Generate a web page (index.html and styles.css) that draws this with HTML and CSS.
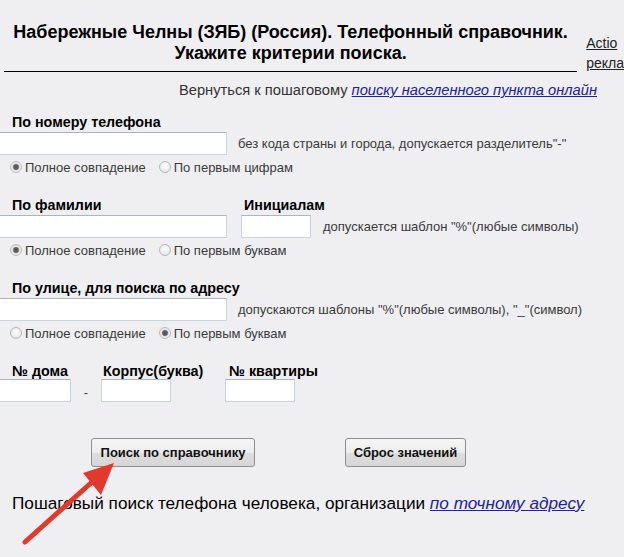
FILE: index.html
```html
<!DOCTYPE html>
<html lang="ru">
<head>
<meta charset="utf-8">
<title>Телефонный справочник</title>
<link rel="stylesheet" href="styles.css">
</head>
<body>
<div class="header">
  <h1 class="title">Набережные Челны (ЗЯБ) (Россия). Телефонный справочник.<br>Укажите критерии поиска.</h1>
  <div class="ad"><a href="#">Actio</a><br><a href="#">рекла</a></div>
</div>
<p class="back">Вернуться к пошаговому <a href="#">поиску населенного пункта онлайн</a></p>

<form class="form">
  <section class="block">
    <div class="label">По номеру телефона</div>
    <div class="row">
      <input class="field wide" type="text">
      <span class="hint hint-phone">без кода страны и города, допускается разделитель"-"</span>
    </div>
    <div class="radios">
      <label><input type="radio" name="r1" checked><span>Полное совпадение</span></label>
      <label><input type="radio" name="r1"><span>По первым цифрам</span></label>
    </div>
  </section>

  <section class="block grid-name">
    <div class="label">По фамилии</div>
    <div class="label label-init">Инициалам</div>
    <div></div>
    <input class="field wide" type="text">
    <input class="field small" type="text">
    <span class="hint hint-init">допускается шаблон "%"(любые символы)</span>
    <div class="radios span3">
      <label><input type="radio" name="r2" checked><span>Полное совпадение</span></label>
      <label><input type="radio" name="r2"><span>По первым буквам</span></label>
    </div>
  </section>

  <section class="block">
    <div class="label">По улице, для поиска по адресу</div>
    <div class="row">
      <input class="field wide" type="text">
      <span class="hint hint-phone">допускаются шаблоны "%"(любые символы), "_"(символ)</span>
    </div>
    <div class="radios">
      <label><input type="radio" name="r3"><span>Полное совпадение</span></label>
      <label><input type="radio" name="r3" checked><span>По первым буквам</span></label>
    </div>
  </section>

  <section class="block grid-house">
    <div class="label">№ дома</div>
    <div></div>
    <div class="label label-korp">Корпус(буква)</div>
    <div></div>
    <div class="label label-kv">№ квартиры</div>
    <input class="field house" type="text">
    <span class="dash">-</span>
    <input class="field small" type="text">
    <div></div>
    <input class="field small" type="text">
  </section>

  <div class="buttons">
    <button type="button" class="btn btn-search">Поиск по справочнику</button>
    <button type="button" class="btn btn-reset">Сброс значений</button>
  </div>
</form>

<p class="bottom">Пошаговый поиск телефона человека, организации <a href="#">по точному адресу</a></p>

<svg class="arrow" width="130" height="100" viewBox="0 0 130 100" aria-hidden="true">
  <line x1="25" y1="84" x2="92" y2="24" stroke="#e2392c" stroke-width="5" stroke-linecap="round"/>
  <polygon points="114,5 83,15 101,37" fill="#e2392c"/>
</svg>
</body>
</html>
```

FILE: styles.css
```css
html, body {
  margin: 0;
  padding: 0;
  background: #efeff1;
}
body {
  font-family: "Liberation Sans", Arial, sans-serif;
  color: #000;
  position: relative;
  width: 624px;
  height: 557px;
  overflow: hidden;
}
.header {
  display: flex;
  align-items: flex-end;
  padding-top: 22px;
}
.title {
  margin: 0 0 0 4px;
  width: 574px;
  font-size: 18px;
  line-height: 21px;
  font-weight: bold;
  text-align: center;
  padding-bottom: 7px;
  border-bottom: 1px solid #000;
  white-space: nowrap;
}
.ad {
  margin-left: 9px;
  font-size: 14px;
  line-height: 20px;
  white-space: nowrap;
  position: relative;
  top: 1px;
}
.ad a {
  color: #222;
  text-decoration: underline;
}
.back {
  margin: 9px 0 0 0;
  padding-right: 27px;
  text-align: right;
  font-size: 14.7px;
  line-height: 18px;
  color: #333;
  white-space: nowrap;
}
.back a {
  color: #2020a8;
  font-style: italic;
}
.form {
  margin: 15px 0 0 -2px;
}
.block {
  margin-bottom: 18px;
}
.label {
  font-size: 14.3px;
  font-weight: bold;
  line-height: 16px;
  padding-left: 14px;
  height: 18px;
  white-space: nowrap;
}
.row {
  display: flex;
  align-items: center;
}
.field {
  box-sizing: border-box;
  height: 23px;
  margin: 0;
  background: #fff;
  border: 1px solid #c9d4df;
  border-top-color: #abb6c2;
  padding: 0 3px;
  font: 13px "Liberation Sans", Arial, sans-serif;
}
.field.wide { width: 229px; }
.field.small { width: 70px; }
.field.house { width: 73px; }
.hint {
  font-size: 13px;
  color: #3a3a3a;
  white-space: nowrap;
}
.hint-phone { margin-left: 11px; }
.hint-init { margin-left: 12px; }
.radios {
  display: flex;
  align-items: center;
  gap: 13px;
  padding-left: 12px;
  height: 24px;
}
.radios label {
  display: flex;
  align-items: center;
  font-size: 13px;
  color: #3a3a3a;
}
.radios input {
  appearance: none;
  -webkit-appearance: none;
  box-sizing: border-box;
  width: 12px;
  height: 12px;
  margin: 0 3px 0 0;
  border-radius: 50%;
  border: 1px solid #b9b9b9;
  background: radial-gradient(circle at 50% 40%, #ffffff 0%, #ececec 60%, #d8d8d8 100%);
}
.radios input:checked {
  background: radial-gradient(circle, #5a5a5a 0 2.2px, #9a9a9a 3px, #e8e8e8 3.6px, #f4f4f4 100%);
}
.grid-name {
  display: grid;
  grid-template-columns: 229px 70px auto;
  column-gap: 14px;
  align-items: center;
}
.grid-name .hint-init { margin-left: -2px; }
.label-init { padding-left: 3px; }
.span3 { grid-column: 1 / 4; }
.grid-house {
  display: grid;
  grid-template-columns: 73px 30px 70px 54px 70px;
  align-items: center;
}
.label-korp { padding-left: 2px; }
.label-kv { padding-left: 4px; }
.grid-house .label { height: 16px; }
.dash {
  font-size: 13px;
  color: #444;
  text-align: center;
  padding-top: 4px;
}
.buttons {
  display: flex;
  margin-top: 36px;
  padding-left: 93px;
  gap: 90px;
}
.btn {
  box-sizing: border-box;
  height: 29px;
  border: 1px solid #8e8e8e;
  border-radius: 3px;
  background: linear-gradient(#f6f6f6 0%, #ececec 50%, #dedede 51%, #d6d6d6 100%);
  font: bold 13px "Liberation Sans", Arial, sans-serif;
  color: #111;
  padding: 0 6px;
  white-space: nowrap;
}
.btn-search { width: 164px; }
.btn-reset { width: 121px; }
.bottom {
  margin: 26px 0 0 12px;
  font-size: 17.2px;
  line-height: 20px;
  white-space: nowrap;
}
.bottom a {
  color: #2020b0;
  font-style: italic;
}
.arrow {
  position: absolute;
  left: 0;
  top: 458px;
}
```
